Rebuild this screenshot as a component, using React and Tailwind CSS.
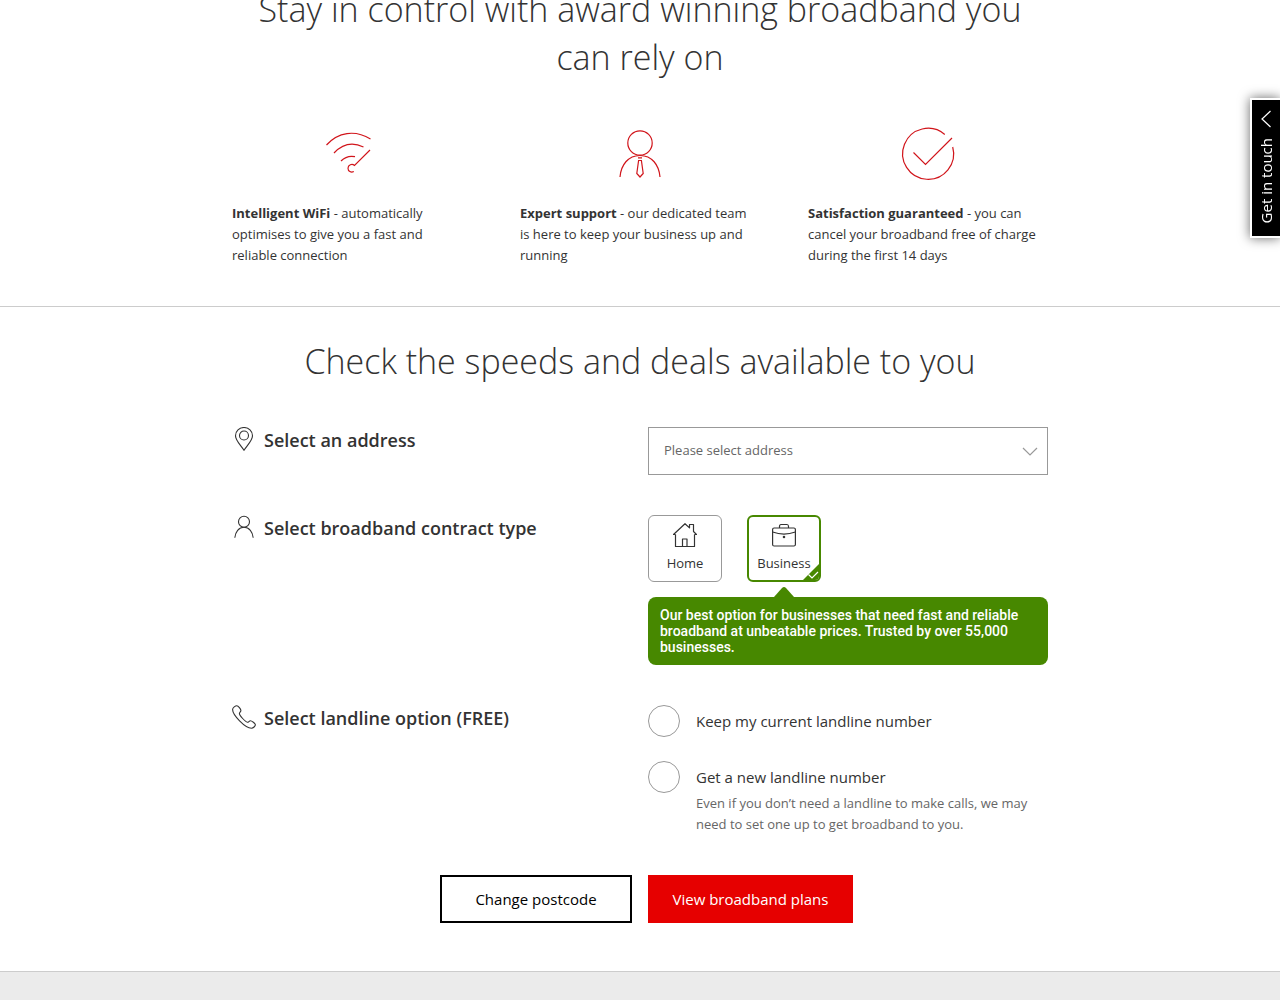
import React, { useState } from "react";

function WifiIcon() {
  return (
    <svg viewBox="0 0 64 64" className="mx-auto size-16" fill="none" stroke="#d1151b" strokeWidth="1.2" aria-hidden="true">
      <path d="M6.500 23C18 10 35 7.500 50.500 17" />
      <path d="M14 31C22 22.500 32 19.500 43.500 25" />
      <path d="M21 39c4-4 8.500-5.500 14-4.300" />
      <path d="M50 28 34.500 43.500c-2.500-2.500-6.500-.500-6.500 2.700 0 3 3 4.800 5.800 3.300" />
    </svg>
  );
}

function ExpertIcon() {
  return (
    <svg viewBox="0 0 64 64" className="mx-auto size-16" fill="none" stroke="#d1151b" strokeWidth="1.2" aria-hidden="true">
      <circle cx="32" cy="21" r="12.200" />
      <path d="M12 55c1-12 8-21.500 20-21.500S51 43 52 55" />
      <path d="M30 35.800h4M30.600 38.500h2.800l1.800 13L32 55l-3.200-3.500z" />
    </svg>
  );
}

function GuaranteeIcon() {
  return (
    <svg viewBox="0 0 64 64" className="mx-auto size-16" fill="none" stroke="#d1151b" strokeWidth="1.2" aria-hidden="true">
      <path d="M48.800 12.500A25.500 25.500 0 1 0 56.700 25" />
      <path d="M17.500 30.500 29.500 42.500 56 16" />
    </svg>
  );
}

function PinIcon() {
  return (
    <svg viewBox="0 0 24 24" className="size-6 shrink-0" fill="none" stroke="#333" strokeWidth="1.100" aria-hidden="true">
      <path d="M12 23.300C9 18.500 3.500 13.500 3.500 8.700a8.500 8.200 0 0 1 17 0c0 4.800-5.500 9.800-8.500 14.600z" />
      <circle cx="12" cy="8.500" r="4.500" />
    </svg>
  );
}

function PersonIcon() {
  return (
    <svg viewBox="0 0 24 24" className="size-6 shrink-0" fill="none" stroke="#333" strokeWidth="1.100" aria-hidden="true">
      <circle cx="12" cy="6.800" r="5.500" />
      <path d="M2.800 22.800c.500-6 4-10.500 9.200-10.500s8.700 4.500 9.200 10.500" />
    </svg>
  );
}

function PhoneIcon() {
  return (
    <svg viewBox="0 0 24 24" className="size-6 shrink-0" fill="none" stroke="#333" strokeWidth="1.100" strokeLinejoin="round" aria-hidden="true">
      <path d="M4.800.700c-1.300 0-4.100 2-4.200 3.800C.500 10 13 23.200 19.500 23.300c1.600 0 4-2.300 3.900-3.600-.1-1.200-3.700-3.900-5-3.900-1.200 0-1.900 1.700-3 1.500-2-.400-8-6.800-8-8.800 0-1 1.500-1.700 1.500-2.900C8.900 4.300 6.300.700 4.800.700z" />
    </svg>
  );
}

function HomeIcon() {
  return (
    <svg viewBox="0 0 24 24" className="size-6" fill="none" stroke="#333" strokeWidth="1.200" strokeLinejoin="round" aria-hidden="true">
      <path d="M2.500 11.500v12h19v-12M2.500 11.500H.500L12 .700l4.500 4.200V1.500h4v7l3 3h-2" />
      <path d="M9.500 23.500v-7.500h4.500v7.500" />
    </svg>
  );
}

function BriefcaseIcon() {
  return (
    <svg viewBox="0 0 24 24" className="size-6" fill="none" stroke="#333" strokeWidth="1.200" strokeLinejoin="round" aria-hidden="true">
      <rect x=".600" y="5" width="22.800" height="18" rx="1.500" />
      <path d="M7.500 5V3.500Q7.500 1.500 9 1.500h6q1.500 0 1.500 2V5M.600 9c7 2.500 15.800 2.500 22.800 0" />
      <circle cx="12" cy="14" r=".700" fill="#333" />
    </svg>
  );
}

const features = [
  { Icon: WifiIcon, title: "Intelligent WiFi", text: " - automatically optimises to give you a fast and reliable connection" },
  { Icon: ExpertIcon, title: "Expert support", text: " - our dedicated team is here to keep your business up and running" },
  { Icon: GuaranteeIcon, title: "Satisfaction guaranteed", text: " - you can cancel your broadband free of charge during the first 14 days" },
];

const contracts = [
  { id: "home", label: "Home", Icon: HomeIcon },
  { id: "business", label: "Business", Icon: BriefcaseIcon },
];

function ContractButton({ label, Icon, selected, onClick }) {
  return (
    <button
      type="button"
      aria-pressed={selected}
      onClick={onClick}
      className={
        "relative flex h-[67px] w-[74px] flex-col items-center overflow-hidden rounded-md text-[13px] leading-5 " +
        (selected ? "border-2 border-[#478800] pt-1.5" : "border border-[#999] pt-[7px]")
      }
    >
      <Icon />
      <span className="mt-1.5">{label}</span>
      {selected && (
        <svg viewBox="0 0 16 16" className="absolute right-0 bottom-0 size-4" aria-hidden="true">
          <path d="M0 16 16 0v16z" fill="#478800" />
          <path d="m5.500 10.500 3.500 3.500 6-6" fill="none" stroke="#fff" strokeWidth="1.200" />
        </svg>
      )}
    </button>
  );
}

function LandlineOption({ id, label, children, value, onChange }) {
  return (
    <div className="flex items-start gap-4">
      <input
        id={id}
        type="radio"
        name="landline"
        checked={value === id}
        onChange={() => onChange(id)}
        className="size-8 shrink-0 appearance-none rounded-full border border-[#999] bg-white checked:border-8 checked:border-[#478800]"
      />
      <div>
        <label htmlFor={id} className="block text-[15px] leading-8">{label}</label>
        {children}
      </div>
    </div>
  );
}

export default function App() {
  const [contract, setContract] = useState("business");
  const [landline, setLandline] = useState("");

  return (
    <div className="flex min-h-screen flex-col overflow-hidden bg-white font-['Open_Sans','Noto_Sans',sans-serif] text-[#333]">
      <section className="-mt-[15px] border-b border-[#ccc] px-4 pb-10">
        <div className="mx-auto max-w-[816px]">
          <h2 className="text-center text-[34px] leading-12 font-light">
            Stay in control with award winning broadband you can rely on
          </h2>
          <div className="mt-[41px] grid grid-cols-3 gap-12">
            {features.map(({ Icon, title, text }) => (
              <div key={title}>
                <Icon />
                <p className="mt-[17px] pr-1.5 text-[13px] leading-[21px]">
                  <strong className="font-bold">{title}</strong>
                  {text}
                </p>
              </div>
            ))}
          </div>
        </div>
      </section>

      <section className="border-b border-[#ccc] px-4 pt-[30px] pb-12">
        <form className="mx-auto max-w-[816px]" onSubmit={(e) => e.preventDefault()}>
          <h2 className="text-center text-[34px] leading-12 font-light">
            Check the speeds and deals available to you
          </h2>

          <div className="mt-[42px] grid grid-cols-2 gap-x-4 gap-y-10">
            <label htmlFor="address" className="flex items-start gap-2 self-start text-lg leading-[26px] font-semibold">
              <PinIcon />
              Select an address
            </label>
            <div className="relative">
              <select
                id="address"
                defaultValue=""
                className="h-12 w-full appearance-none border border-[#999] bg-white pr-10 pl-[15px] text-[13px] text-[#666]"
              >
                <option value="">Please select address</option>
              </select>
              <svg viewBox="0 0 16 16" className="pointer-events-none absolute top-4 right-2.5 size-4" fill="none" stroke="#999" strokeWidth="1.200" aria-hidden="true">
                <path d="m1 5 7 7 7-7" />
              </svg>
            </div>

            <h3 className="flex items-start gap-2 text-lg leading-[26px] font-semibold">
              <PersonIcon />
              Select broadband contract type
            </h3>
            <div>
              <div className="flex gap-[25px]">
                {contracts.map((c) => (
                  <ContractButton
                    key={c.id}
                    label={c.label}
                    Icon={c.Icon}
                    selected={contract === c.id}
                    onClick={() => setContract(c.id)}
                  />
                ))}
              </div>
              <div className="relative mt-[15px] rounded-lg bg-[#478800] px-3 py-2.5 font-[Roboto,sans-serif] text-sm leading-4 font-medium text-white">
                <svg viewBox="0 0 20 10" className="absolute -top-2.5 left-[126px] h-2.5 w-5" aria-hidden="true">
                  <path d="M0 10 8 1q2-2 4 0l8 9z" fill="#478800" />
                </svg>
                Our best option for businesses that need fast and reliable broadband at unbeatable prices. Trusted by over 55,000 businesses.
              </div>
            </div>

            <h3 className="flex items-start gap-2 text-lg leading-[26px] font-semibold">
              <PhoneIcon />
              Select landline option (FREE)
            </h3>
            <div className="flex flex-col gap-6">
              <LandlineOption id="keep" label="Keep my current landline number" value={landline} onChange={setLandline} />
              <LandlineOption id="new" label="Get a new landline number" value={landline} onChange={setLandline}>
                <p className="text-[13px] leading-[21px] text-[#666]">
                  Even if you don’t need a landline to make calls, we may need to set one up to get broadband to you.
                </p>
              </LandlineOption>
            </div>
          </div>

          <div className="mt-10 grid grid-cols-2 gap-4">
            <button type="button" className="h-12 w-48 justify-self-end border-2 border-black text-[15px] text-black">
              Change postcode
            </button>
            <button type="submit" className="h-12 w-[205px] bg-[#e60000] text-[15px] text-white">
              View broadband plans
            </button>
          </div>
        </form>
      </section>

      <footer className="grow bg-[#ebebeb]" />

      <button
        type="button"
        className="fixed top-[98px] right-0 flex h-[140px] w-[30px] flex-col items-center gap-2.5 border-2 border-r-0 border-white bg-black pt-2.5 text-[15px] text-white shadow-[0_0_12px_rgba(0,0,0,0.6)]"
      >
        <svg viewBox="0 0 12 18" className="h-[18px] w-3" fill="none" stroke="#fff" strokeWidth="1.200" aria-hidden="true">
          <path d="M10.500 1 2 9l8.500 8" />
        </svg>
        <span className="rotate-180 leading-6 whitespace-nowrap [writing-mode:vertical-rl]">Get in touch</span>
      </button>
    </div>
  );
}
